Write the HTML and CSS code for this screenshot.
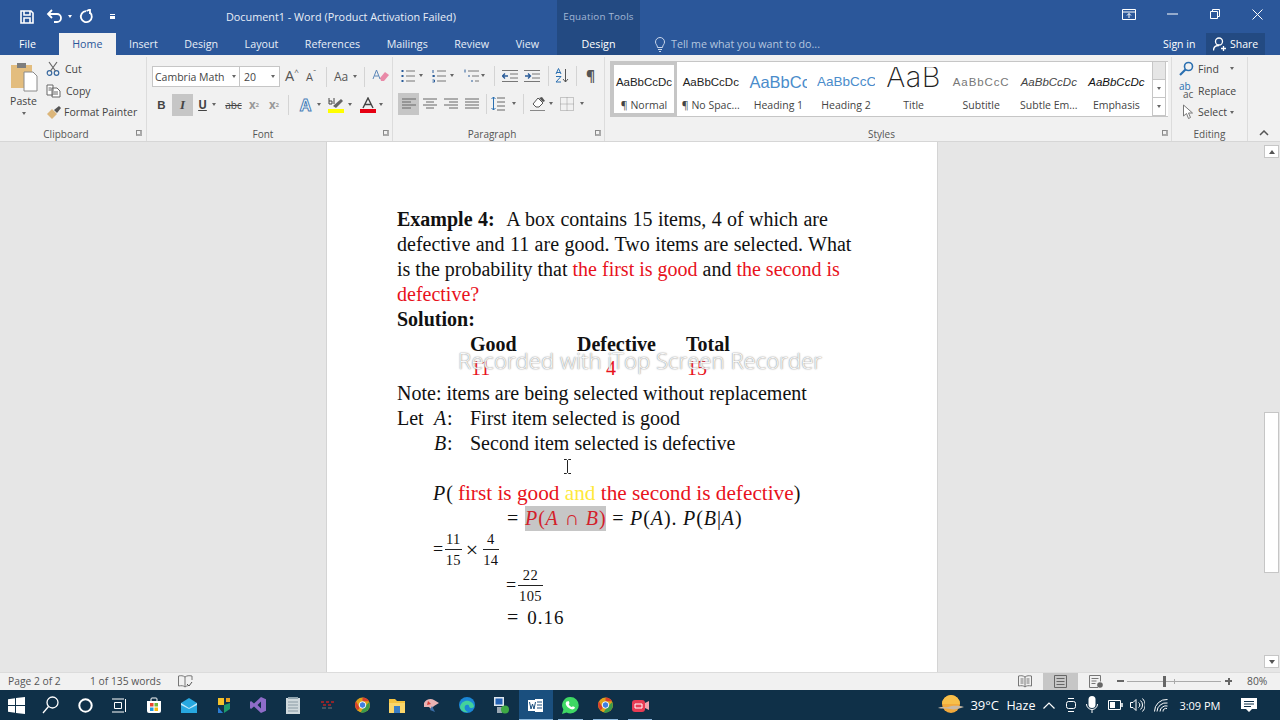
FILE: index.html
```html
<!DOCTYPE html>
<html lang="en">
<head>
<meta charset="utf-8">
<title>Document1 - Word</title>
<link rel="stylesheet" href="styles.css">
</head>
<body>
<div class="app">
<header class="head">
  <div class="head-left">
    <div class="qat">
      <svg class="q-save" width="16" height="16" viewBox="0 0 16 16" fill="none" stroke="#fff" stroke-width="1.6"><path d="M2 2h10l2 2v10H2z"/><path d="M5 2v4h6V2M5 14V9h6v5"/></svg>
      <svg class="q-undo" width="17" height="15" viewBox="0 0 17 15" fill="none" stroke="#fff" stroke-width="1.8"><path d="M2 5h9a4 4 0 0 1 0 8H8"/><path d="M6 1L2 5l4 4"/></svg>
      <span class="caret w q-c1"></span>
      <svg class="q-redo" width="15" height="15" viewBox="0 0 15 15" fill="none" stroke="#fff" stroke-width="1.8"><path d="M11 3.500a5.500 5.500 0 1 1-4-1.400"/><path d="M7.500 2L11 .5V5"/></svg>
      <span class="q-more"></span>
    </div>
    <div class="doc-title">Document1 - Word (Product Activation Failed)</div>
  </div>
  <div class="ctx">
    <div class="ctx-title">Equation Tools</div>
    <div class="ctx-tab">Design</div>
  </div>
  <div class="winctl">
    <svg width="14" height="11" viewBox="0 0 14 11" fill="none" stroke="#fff"><path d="M.5.500h13v10H.5zM.5 3h13"/><path d="M7 9V4.500M5 6.500l2-2 2 2"/></svg>
    <svg class="wc-min" width="11" height="2" viewBox="0 0 11 2"><path d="M0 1h11" stroke="#fff"/></svg>
    <svg class="wc-max" width="10" height="10" viewBox="0 0 10 10" fill="none" stroke="#fff"><path d="M.5 2.500h7v7h-7zM2.500 2.500v-2h7v7h-2"/></svg>
    <svg class="wc-close" width="11" height="11" viewBox="0 0 11 11" stroke="#fff"><path d="M.5.500l10 10M10.500.500l-10 10"/></svg>
  </div>
  <nav class="tabs">
    <span class="tab file">File</span><span class="tab active">Home</span><span class="tab">Insert</span><span class="tab">Design</span><span class="tab">Layout</span><span class="tab">References</span><span class="tab">Mailings</span><span class="tab">Review</span><span class="tab">View</span>
  </nav>
  <div class="tabs-right">
    <div class="tellme">
      <svg width="10" height="15" viewBox="0 0 10 15" fill="none" stroke="#c9d6ea"><path d="M2.500 10.500C2.500 8 .5 7.500.5 5a4.500 4.500 0 0 1 9 0c0 2.500-2 3-2 5.500zM3 12.500h4M4 14.500h2"/></svg>
      <span>Tell me what you want to do...</span>
    </div>
    <span class="signin">Sign in</span>
    <span class="share">
      <svg width="14" height="14" viewBox="0 0 14 14" fill="none" stroke="#fff" stroke-width="1.300"><circle cx="6" cy="4.500" r="3.500"/><path d="M.5 13.500c0-3 2-5 5.500-5M10.500 9v5M8 11.500h5"/></svg>
      Share
    </span>
  </div>
</header>

<section class="ribbon">
  <div class="group g-clip">
    <div class="g-body clip-body">
      <div class="paste">
        <svg width="28" height="30" viewBox="0 0 28 30"><rect x="1" y="3" width="21" height="23" fill="#e3bd7e"/><rect x="7" y="1" width="9" height="5" fill="#7d7d7d"/><path d="M14 10h9l4 4v15H14z" fill="#fff" stroke="#8a8a8a"/></svg>
        <span>Paste</span>
        <span class="caret"></span>
      </div>
      <div class="clip-col">
        <div class="sm"><svg width="15" height="15" viewBox="0 0 15 15" fill="none" stroke="#39699f" stroke-width="1.200"><circle cx="3.500" cy="12" r="2.300"/><circle cx="10.500" cy="12" r="2.300"/><path d="M4.500 10L11 1M9.500 10L3 1" stroke="#666"/></svg>Cut</div>
        <div class="sm"><svg width="15" height="14" viewBox="0 0 15 14" fill="none" stroke="#666"><path d="M1 1h6v10H1zM6 4h5l3 3v6H6z" fill="#fff"/><path d="M2.500 4h3M2.500 6h3M8 8h4M8 10h4"/></svg>Copy</div>
        <div class="sm"><svg width="16" height="15" viewBox="0 0 16 15"><path d="M1 9l5-5 5 5-5 5z" fill="#dcb67a"/><path d="M8 5l5-4 2 2-4 5z" fill="#555"/></svg>Format Painter</div>
      </div>
    </div>
    <div class="g-label">Clipboard<i class="launch"></i></div>
  </div>

  <div class="group g-font">
    <div class="g-body rows">
      <div class="row">
        <div class="combo c-font"><span>Cambria Math</span><span class="caret"></span></div>
        <div class="combo c-size"><span>20</span><span class="caret"></span></div>
        <span class="glyph grow">A<sup>^</sup></span>
        <span class="glyph shrink">A<sup>ˇ</sup></span>
        <i class="sep"></i>
        <span class="glyph aa">Aa</span><span class="caret"></span>
        <i class="sep"></i>
        <svg class="eraser" width="17" height="15" viewBox="0 0 17 15"><path d="M8 9l5-6 4 3-5 6H9z" fill="#e98aa8"/><path d="M1 10L4.500 1 8 10M2.500 7h4" fill="none" stroke="#5b86b8"/></svg>
      </div>
      <div class="row r2">
        <span class="ib bold">B</span>
        <span class="ib on ital">I</span>
        <span class="ib under">U</span><span class="caret"></span>
        <span class="ib strike">abc</span>
        <span class="ib mute">x<sub>2</sub></span>
        <span class="ib mute">x<sup>2</sup></span>
        <i class="sep"></i>
        <span class="ib effect">A</span><span class="caret"></span>
        <span class="ib hilite"><svg width="17" height="16" viewBox="0 0 17 16"><path d="M5 9l8-7 2 2-7 7z" fill="#666"/><path d="M1 1v6h3V4H1M6 1v6" fill="none" stroke="#444"/><rect x="0" y="12" width="16" height="4" fill="#ffff00"/></svg></span><span class="caret"></span>
        <span class="ib fcolor"><svg width="16" height="16" viewBox="0 0 16 16"><path d="M3 11L8 1l5 10M5 7.500h6" fill="none" stroke="#444" stroke-width="1.400"/><rect y="12" width="16" height="4" fill="#e60012"/></svg></span><span class="caret"></span>
      </div>
    </div>
    <div class="g-label">Font<i class="launch"></i></div>
  </div>

  <div class="group g-para">
    <div class="g-body rows">
      <div class="row p1">
        <svg class="pi" width="14" height="14" viewBox="0 0 14 14" stroke="#777"><path d="M5 2h9M5 7h9M5 12h9"/><path d="M.5 2h2M.5 7h2M.5 12h2" stroke="#2a5c99" stroke-width="2"/></svg><span class="caret ca"></span>
        <svg class="pi" width="14" height="14" viewBox="0 0 14 14" stroke="#777"><path d="M5 2h9M5 7h9M5 12h9"/><path d="M1 1v3M.5 6.500h2v1h-2M.5 11h2v2h-2" stroke="#2a5c99" fill="none"/></svg><span class="caret cb"></span>
        <svg class="pi pm" width="16" height="14" viewBox="0 0 16 14" stroke="#777"><path d="M4 2h11M8 7h7M11 12h4"/><path d="M1 .5v3M5 6v2M8 11v2" stroke="#2a5c99"/></svg><span class="caret cc"></span>
        <i class="sep s1"></i>
        <svg class="pi w21" width="16" height="12" viewBox="0 0 16 12" stroke="#777"><path d="M0 .5h16M8 4h8M8 8h8M0 11.500h16"/><path d="M6 6H1M3 3.500L.5 6 3 8.500" stroke="#2a5c99" fill="none" stroke-width="1.300"/></svg>
        <svg class="pi w21" width="16" height="12" viewBox="0 0 16 12" stroke="#777"><path d="M0 .5h16M8 4h8M8 8h8M0 11.500h16"/><path d="M1 6h5M4 3.500L6.500 6 4 8.500" stroke="#2a5c99" fill="none" stroke-width="1.300"/></svg>
        <i class="sep s2"></i>
        <svg class="pi w21" width="14" height="15" viewBox="0 0 14 15" fill="none"><path d="M1 6l2.500-5.500L6 6M1.500 4.500h4M1 8.500h5L1 14h5" stroke="#2a6fb0"/><path d="M10.500 1v13M8 11l2.500 3 2.500-3" stroke="#555"/></svg>
        <i class="sep s3"></i>
        <span class="pilcrow">¶</span>
      </div>
      <div class="row p2">
        <span class="ib on"><svg width="14" height="12" viewBox="0 0 14 12" stroke="#666"><path d="M0 1h14M0 4h9M0 7h14M0 10h9"/></svg></span>
        <span class="ib"><svg width="14" height="12" viewBox="0 0 14 12" stroke="#666"><path d="M0 1h14M3 4h8M0 7h14M3 10h8"/></svg></span>
        <span class="ib"><svg width="14" height="12" viewBox="0 0 14 12" stroke="#666"><path d="M0 1h14M5 4h9M0 7h14M5 10h9"/></svg></span>
        <span class="ib"><svg width="14" height="12" viewBox="0 0 14 12" stroke="#666"><path d="M0 1h14M0 4h14M0 7h14M0 10h14"/></svg></span>
        <i class="sep"></i>
        <span class="ib ls"><svg width="14" height="15" viewBox="0 0 14 15" fill="none" stroke="#666"><path d="M6 2h8M6 6h8M6 10h8M6 14h8"/><path d="M2.500 1v13M.5 3l2-2 2 2M.5 12l2 2 2-2" stroke="#2a6fb0"/></svg></span><span class="caret"></span>
        <i class="sep"></i>
        <span class="ib"><svg width="17" height="15" viewBox="0 0 17 15"><path d="M3 8l5-6 5 5-4 4H6z" fill="#fff" stroke="#555"/><path d="M9 2l4 4 2-1-3-4z" fill="#555"/><path d="M0 14.500h15" stroke="#888"/></svg></span><span class="caret"></span>
        <span class="ib"><svg width="14" height="14" viewBox="0 0 14 14" fill="none" stroke="#999" stroke-dasharray="1 1"><path d="M.5.500h13v13H.5zM7 .500v13M.5 7h13"/></svg></span><span class="caret cl"></span>
      </div>
    </div>
    <div class="g-label">Paragraph<i class="launch"></i></div>
  </div>

  <div class="group g-styles">
    <div class="g-body">
      <div class="gallery">
        <div class="sty cur"><span class="pv">AaBbCcDc</span><span class="nm">¶ Normal</span></div>
        <div class="sty"><span class="pv">AaBbCcDc</span><span class="nm">¶ No Spac...</span></div>
        <div class="sty"><span class="pv h1">AaBbCc</span><span class="nm">Heading 1</span></div>
        <div class="sty"><span class="pv h2">AaBbCcC</span><span class="nm">Heading 2</span></div>
        <div class="sty"><span class="pv ttl">AaB</span><span class="nm">Title</span></div>
        <div class="sty"><span class="pv sub">AaBbCcC</span><span class="nm">Subtitle</span></div>
        <div class="sty"><span class="pv em">AaBbCcDc</span><span class="nm">Subtle Em...</span></div>
        <div class="sty"><span class="pv em dk">AaBbCcDc</span><span class="nm">Emphasis</span></div>
        <div class="gal-scroll"><span class="gs-up"></span><span class="gs-dn"><i class="caret"></i></span><span class="gs-more"><i class="caret"></i></span></div>
      </div>
    </div>
    <div class="g-label">Styles<i class="launch"></i></div>
  </div>

  <div class="group g-edit">
    <div class="g-body edit-col">
      <div class="sm"><svg width="15" height="15" viewBox="0 0 15 15" fill="none" stroke="#2a6fb0" stroke-width="1.600"><circle cx="9.500" cy="5.500" r="4"/><path d="M6.500 8.500L1 14" stroke-width="2.200"/></svg>Find<span class="caret cf"></span></div>
      <div class="sm rep"><span class="abac"><b>ab</b><b>ac</b></span>Replace</div>
      <div class="sm sel"><svg width="13" height="16" viewBox="0 0 13 16" fill="#fff" stroke="#777"><path d="M1.500 1v11l3-2.500 2 5 2-1-2-4.500h4z"/></svg>Select<span class="caret"></span></div>
    </div>
    <div class="g-label gl-edit">Editing</div>
  </div>
  <div class="collapse"><svg width="10" height="6" viewBox="0 0 10 6" fill="none" stroke="#555" stroke-width="1.500"><path d="M1 5l4-4 4 4"/></svg></div>
</section>

<main class="work">
  <div class="canvas">
    <article class="page">
      <div class="line wide"><b class="ex">Example 4:</b>&nbsp; A box contains 15 items, 4 of which are</div>
      <div class="line wide">defective and 11 are good. Two items are selected. What</div>
      <div class="line">is the probability that <span class="red">the first is good</span> and <span class="red">the second is</span></div>
      <div class="line"><span class="red">defective?</span></div>
      <div class="line"><b>Solution:</b></div>
      <div class="line cols hd"><b class="c1">Good</b><b class="c2">Defective</b><b class="c3">Total</b></div>
      <div class="line cols red"><span class="c1 n1">11</span><span class="c2 n2">4</span><span class="c3">15</span></div>
      <div class="line">Note: items are being selected without replacement</div>
      <div class="line let"><span class="l0">Let</span><i class="mv">A</i><span class="colon">:</span><span>First item selected is good</span></div>
      <div class="line let"><span class="l0"></span><i class="mv">B</i><span class="colon">:</span><span>Second item selected is defective</span></div>
      <div class="line"></div>
      <div class="line ind"><i class="mv">P</i><span class="mth">(</span> <span class="red">first is good <span class="yel">and</span> the second is defective</span><span class="mth">)</span></div>
      <div class="line eq"><span class="mth">=</span> <span class="hl"><i class="mv">P</i>(<i class="mv">A</i> ∩ <i class="mv">B</i>)</span> <span class="mth">=</span> <i class="mv">P</i><span class="mth">(</span><i class="mv">A</i><span class="mth">).</span> <i class="mv">P</i><span class="mth">(</span><i class="mv">B</i><span class="mth">|</span><i class="mv">A</i><span class="mth">)</span></div>
      <div class="fline f1"><span class="feq">=</span><span class="frac"><span>11</span><span>15</span></span><span class="times">×</span><span class="frac"><span>4</span><span>14</span></span></div>
      <div class="fline f2"><span class="feq">=</span><span class="frac"><span>22</span><span>105</span></span></div>
      <div class="line eq last"><span class="mth">=</span> <span class="dec">0.16</span></div>
      <svg class="ibeam" width="9" height="15" viewBox="0 0 9 15" fill="none" stroke="#222"><path d="M1 .5h2.500l1 1 1-1H8M4.500 1.500v12M1 14.500h2.500l1-1 1 1H8"/></svg>
    </article>
    <div class="watermark">Recorded with iTop Screen Recorder</div>
  </div>
  <aside class="vscroll">
    <span class="vbtn"><i class="tri up"></i></span>
    <span class="vtrack"><span class="vthumb"></span></span>
    <span class="vbtn"><i class="tri dn"></i></span>
  </aside>
</main>

<footer class="status">
  <span class="st-a">Page 2 of 2</span>
  <span class="st-b">1 of 135 words</span>
  <svg width="15" height="13" viewBox="0 0 15 13" fill="none" stroke="#777"><path d="M7 2C5 .5 3 .5 .5 1v10c3-.5 5-.5 6.500 1 1.500-1 2-1.200 3-1.200M7 2v10M7 2c2-1.500 4-1.500 7-1v4"/><path d="M9 9l2 2 3-4" stroke="#555"/></svg>
  <span class="st-fill"></span>
  <svg class="vw" width="14" height="13" viewBox="0 0 14 13" fill="none" stroke="#777"><path d="M7 2C5 .5 3 .5.500 1v10c3-.5 5-.5 6.500 1 1.500-1.500 3.500-1.500 6.500-1V1C11 .5 9 .5 7 2zM7 2v10M2.500 4h3M2.500 6h3M2.500 8h3M8.500 4h3M8.500 6h3M8.500 8h3"/></svg>
  <span class="vw-on"><svg width="13" height="13" viewBox="0 0 13 13" fill="none" stroke="#666"><path d="M.5.500h12v12H.5zM2.500 3.500h8M2.500 6.500h8M2.500 9.500h8"/></svg></span>
  <svg class="vw2" width="14" height="13" viewBox="0 0 14 13" fill="none" stroke="#777"><path d="M9 12.500H.5V.5h11v6M2.500 3.500h7M2.500 6h5M2.500 8.500h4"/><circle cx="11" cy="10" r="2.800" fill="#666" stroke="none"/></svg>
  <span class="zoom-minus"></span>
  <span class="slider"><i class="thumb"></i><i class="tick"></i></span>
  <span class="zoom-plus"></span>
  <span class="st-z">80%</span>
</footer>

<footer class="taskbar">
  <span class="tb first"><svg width="17" height="17" viewBox="0 0 17 17" fill="#fff"><path d="M0 2.300l7-1v6.700H0zM8 1.100L17 0v8H8zM0 9h7v6.700l-7-1zM8 9h9v8l-9-1.100z"/></svg></span>
  <span class="tb"><svg width="17" height="18" viewBox="0 0 17 18" fill="none" stroke="#fff" stroke-width="1.300"><circle cx="10.500" cy="6.500" r="5.500"/><path d="M6.500 10.500L1 17"/></svg></span>
  <span class="tb"><svg width="15" height="15" viewBox="0 0 15 15" fill="none" stroke="#fff" stroke-width="2"><circle cx="7.500" cy="7.500" r="6.200"/></svg></span>
  <span class="tb"><svg width="15" height="15" viewBox="0 0 15 15" fill="none" stroke="#fff"><path d="M2.500 4.500h7v6h-7zM0 1h12M0 14h12M13.500 1v13" /></svg></span>
  <span class="tb"><svg width="14" height="16" viewBox="0 0 14 16"><path d="M0 4h14v10a2 2 0 0 1-2 2H2a2 2 0 0 1-2-2z" fill="#fff"/><path d="M4 4V2a1 1 0 0 1 1-1h4a1 1 0 0 1 1 1v2" fill="none" stroke="#fff"/><rect x="3" y="6" width="3.500" height="3.500" fill="#e8432f"/><rect x="7.500" y="6" width="3.500" height="3.500" fill="#72b83b"/><rect x="3" y="10.500" width="3.500" height="3.500" fill="#1f9ae0"/><rect x="7.500" y="10.500" width="3.500" height="3.500" fill="#f7b80c"/></svg></span>
  <span class="tb"><svg width="16" height="15" viewBox="0 0 16 15"><path d="M0 5l8-5 8 5v10H0z" fill="#27a8e0"/><path d="M0 5l8 5 8-5v2l-8 4-8-4z" fill="#bfe8fa"/></svg></span>
  <span class="tb"><svg width="14" height="17" viewBox="0 0 14 17"><path d="M1 1h6v7H1z" fill="#f4c22b"/><path d="M7 8l6-2v6l-6 4z" fill="#1c9a6d"/><path d="M1 10l5 6H1z" fill="#2b7cd3"/><path d="M9 1h4v4H9z" fill="#e8a020"/></svg></span>
  <span class="tb"><svg width="16" height="16" viewBox="0 0 16 16"><path d="M11 0l5 2.300v11.400L11 16 4 9.500 1 12 0 11V5l1-1 3 2.500zM11 4.500L7.500 8 11 11.500z" fill="#8e6cc9"/></svg></span>
  <span class="tb"><svg width="14" height="17" viewBox="0 0 14 17"><rect y="1" width="14" height="16" fill="#cfd8dc"/><path d="M2 5h10M2 8h10M2 11h10M2 14h10" stroke="#8a9aa4"/><rect x="2" y="0" width="10" height="2" fill="#90a4ae"/></svg></span>
  <span class="tb"><svg width="15" height="8" viewBox="0 0 15 8"><path d="M1 1h3M6 1h3M11 1h3M3 4h3M8 4h3" stroke="#b22" stroke-width="1.400"/><path d="M2 7h4M8 7h4" stroke="#777"/></svg></span>
  <span class="tb"><svg width="15" height="16" viewBox="0 0 16 16"><circle cx="8" cy="8" r="8" fill="#e0a21b"/><path d="M8 0a8 8 0 0 1 7 4H8z" fill="#d9402e"/><path d="M1 4l4 7-2 2.500A8 8 0 0 1 1 4z" fill="#d9402e"/><path d="M6 16l3-5 6-6a8 8 0 0 1-9 11z" fill="#3b9b4a"/><circle cx="8" cy="8" r="3.500" fill="#3f7fe0" stroke="#fff"/></svg></span>
  <span class="tb"><svg width="16" height="15" viewBox="0 0 16 15"><path d="M0 1h6l2 2h8v12H0z" fill="#f5c33f"/><path d="M0 5h16v10H0z" fill="#fbd66a"/><rect x="5" y="8" width="6" height="7" fill="#3a7dc4"/></svg></span>
  <span class="tb"><svg width="17" height="15" viewBox="0 0 17 15"><path d="M1 5c2-4 7-5 10-3l5 3-5 3-3 3-2-2-5 0z" fill="#e9b3b3"/><path d="M9 8l3 6-5-2z" fill="#3b6ea8"/><path d="M5 3l3 3-4 1z" fill="#d8413a"/></svg></span>
  <span class="tb"><svg width="16" height="16" viewBox="0 0 16 16"><circle cx="8" cy="8" r="8" fill="#1b87d6"/><path d="M1 10C2 5 6 3 10 4c3 1 5 3 5 6-2 2-5 1-5-1 0-1-2-2-4 0-1 2 0 5 3 6-4 1-8-2-8-5z" fill="#43d19b"/></svg></span>
  <span class="tb"><svg width="15" height="17" viewBox="0 0 15 17"><rect width="10" height="9" fill="#dfe7ee"/><rect x="1.500" y="1.500" width="7" height="6" fill="#2462b3"/><rect x="3" y="10" width="5" height="6" fill="#9aa7b3"/><circle cx="11" cy="12.500" r="4" fill="#3eaa44"/></svg></span>
  <span class="tb word run"><svg width="15" height="15" viewBox="0 0 15 15"><rect x="7" y="1" width="8" height="13" fill="#fff"/><path d="M9 4h5M9 7h5M9 10h5" stroke="#1a4f7e"/><rect y="2" width="9" height="11" fill="#fff"/><path d="M1.500 4l1.500 7 1.500-5 1.500 5 1.500-7" fill="none" stroke="#1a4f7e"/></svg></span>
  <span class="tb run"><svg width="17" height="17" viewBox="0 0 17 17"><path d="M8.500 0a8.200 8.200 0 0 1 0 16.500c-1.500 0-2.700-.3-3.900-1L0 17l1.400-4.400A8.200 8.200 0 0 1 8.500 0z" fill="#3ed864"/><path d="M5.500 4.500c1-1 1.500 0 2 1.500 0 .6-1 1-.7 1.500.6 1.200 1.500 2 2.700 2.500.5.200 1-1 1.500-.8 1.500.6 2.200 1 1.800 1.800-.6 1.400-2.500 1.800-4.300 1-2.500-1-4-2.700-4.700-4.700-.3-1 .1-2 .7-2.800z" fill="#fff"/></svg></span>
  <span class="tb run"><svg width="15" height="16" viewBox="0 0 16 16"><circle cx="8" cy="8" r="8" fill="#e0a21b"/><path d="M8 0a8 8 0 0 1 7 4H8z" fill="#d9402e"/><path d="M1 4l4 7-2 2.500A8 8 0 0 1 1 4z" fill="#d9402e"/><path d="M6 16l3-5 6-6a8 8 0 0 1-9 11z" fill="#3b9b4a"/><circle cx="8" cy="8" r="3.500" fill="#3f7fe0" stroke="#fff"/></svg></span>
  <span class="tb run"><svg width="17" height="13" viewBox="0 0 17 13"><rect width="13" height="12" rx="3" y="1" fill="#e83b54"/><path d="M3 5h7v4H3z" fill="none" stroke="#fff"/><path d="M13 4l4-2v9l-4-2z" fill="#f2a3ae"/></svg></span>
  <span class="tray">
    <svg class="sun" width="26" height="20" viewBox="0 0 26 20"><circle cx="13" cy="9" r="9" fill="#f2a93b"/><path d="M4 9a9 9 0 0 1 18 0z" fill="#f7bf4a"/><path d="M0 13c4-2 6 0 10-1s8-2 16 0c-6 2-10 3-14 2s-8 0-12-1z" fill="#c8b9a6"/></svg>
    <span class="temp">39°C</span><span class="haze">Haze</span>
    <svg class="tr-up" width="12" height="7" viewBox="0 0 12 7" fill="none" stroke="#fff" stroke-width="1.200"><path d="M.5 6.500L6 1l5.500 5.500"/></svg>
    <svg class="tr-cam" width="10" height="16" viewBox="0 0 10 16" fill="none" stroke="#fff"><rect x=".5" y="4.500" width="9" height="7" rx="2"/><path d="M2 1.500h6M2 14.500h6"/></svg>
    <svg class="tr-mic" width="12" height="18" viewBox="0 0 12 18"><rect x="2.500" y="0" width="7" height="12" rx="3.500" fill="#fff"/><path d="M.5 8a5.500 5.500 0 0 0 11 0M6 14v3" fill="none" stroke="#fff"/></svg>
    <svg class="tr-bat" width="15" height="10" viewBox="0 0 15 10" fill="none" stroke="#fff"><path d="M.5.500h12v9H.5z"/><path d="M14 3v4" stroke-width="1.500"/><rect x="2" y="2" width="5" height="6" fill="#fff" stroke="none"/></svg>
    <svg class="tr-vol" width="15" height="14" viewBox="0 0 15 14" fill="none" stroke="#fff"><path d="M.5 4.500h2.500l3-3v11l-3-3H.5zM8.500 4.500a3 3 0 0 1 0 5M10.500 2.500a6 6 0 0 1 0 9M12.500.5a9 9 0 0 1 0 13"/></svg>
    <svg class="tr-wifi" width="14" height="13" viewBox="0 0 14 13" fill="none" stroke="#fff"><path d="M.5 12.500a12 12 0 0 1 13-12M3 12.500a9 9 0 0 1 10.500-8.500M6 12.500a6 6 0 0 1 7.500-5.500M9 12.500a3 3 0 0 1 4-3"/></svg>
    <span class="clock">3:09 PM</span>
    <svg class="tr-note" width="16" height="15" viewBox="0 0 16 15"><path d="M0 0h16v11h-5l-3 3-3-3H0z" fill="#fff"/><path d="M3 3.500h10M3 6h10M3 8.500h7" stroke="#0f3048"/></svg>
  </span>
</footer>
</div>
</body>
</html>
```
FILE: styles.css
```css
* { box-sizing: border-box; }
html, body { margin: 0; padding: 0; height: 720px; overflow: hidden; }
body { font-family: "Open Sans", "Noto Sans", sans-serif; font-size: 11px; color: #444; }
.app { width: 1280px; height: 720px; display: flex; flex-direction: column; }
svg { display: block; flex: none; }

/* header */
.head { display: grid; grid-template-columns: 557px 83px 1fr; grid-template-rows: 33px 22px; background: #2b579a; color: #fff; flex: none; }
.head-left { display: flex; align-items: center; }
.qat { display: flex; align-items: center; width: 226px; padding-left: 19px; height: 28px; }
.q-undo { margin-left: 11px; }
.q-c1 { margin-left: 5px; }
.q-redo { margin-left: 7px; }
.q-more { width: 5px; height: 5px; margin-left: 16px; border-top: 1px solid #fff; border-bottom: 3px solid #fff; }
.doc-title { font-size: 10.830px; color: #e8eef7; white-space: nowrap; }
.ctx { grid-column: 2; grid-row: 1 / span 2; background: #234a82; display: grid; grid-template-rows: 33px 22px; justify-items: center; align-items: center; }
.ctx-title { font-size: 9.800px; color: #a3b8d6; letter-spacing: .2px; }
.ctx-tab { font-size: 10.700px; color: #fff; }
.winctl { grid-column: 3; grid-row: 1; display: flex; align-items: center; padding-left: 482px; height: 28px; }
.wc-min { margin-left: 31px; }
.wc-max { margin-left: 32px; }
.wc-close { margin-left: 32px; }
.tabs { grid-column: 1; grid-row: 2; display: flex; padding-left: 5px; align-items: stretch; }
.tab { padding: 0 13.250px; display: flex; align-items: center; font-size: 10.700px; color: #e8eef7; white-space: nowrap; }
.tab.file { padding: 0 14px; margin-right: 9px; color: #fff; }
.tab.active { background: #f1f1f1; color: #2b579a; }
.tabs-right { grid-column: 3; grid-row: 2; display: flex; align-items: center; }
.tellme { display: flex; align-items: center; gap: 6px; padding-left: 15px; width: 523px; color: #b4c6df; font-size: 10.700px; }
.signin { font-size: 10.500px; width: 43px; color: #fff; }
.share { height: 22px; width: 59px; background: #234a82; display: flex; align-items: center; gap: 3px; padding-left: 7px; font-size: 10.500px; color: #fff; }

/* ribbon */
.ribbon { height: 87px; flex: none; background: #f1f1f1; display: flex; border-bottom: 1px solid #d6d6d6; position: relative; }
.group { display: flex; flex-direction: column; height: 84px; margin-top: 2px; border-right: 1px solid #dcdcdc; flex: none; }
.g-clip { width: 147px; }
.g-font { width: 246px; padding-left: 5px; }
.g-para { width: 212px; padding-left: 5px; }
.g-styles { width: 567px; padding-left: 5px; border-right: 1px solid #dcdcdc; }
.g-edit { width: 76px; }
.g-body { flex: 1; min-height: 0; }
.g-label { height: 19px; padding: 4px 18px 0 0; display: flex; align-items: center; justify-content: center; font-size: 10px; color: #555; position: relative; }
.g-clip .g-label { padding-right: 14px; }
.gl-edit { padding-right: 0; }
.launch { position: absolute; right: 3px; top: 8px; width: 6px; height: 6px; border-left: 1px solid #888; border-top: 1px solid #888; border-bottom: 2px solid #aaa; border-right: 2px solid #aaa; }
.g-clip .launch { right: 4px; }
.caret { display: inline-block; flex: none; width: 0; height: 0; border-left: 2.500px solid transparent; border-right: 2.500px solid transparent; border-top: 3px solid #666; }
.caret.w { border-top-color: #fff; }

.clip-body { display: flex; }
.paste { width: 46px; display: flex; flex-direction: column; align-items: center; padding-top: 5px; padding-left: 1px; font-size: 10.500px; color: #444; }
.paste span:nth-child(2) { margin-top: 2px; line-height: 15px; }
.paste .caret { margin-top: 3px; }
.clip-col { display: flex; flex-direction: column; padding-top: 1px; }
.sm { height: 21.700px; display: flex; align-items: center; gap: 4px; font-size: 10.500px; color: #444; white-space: nowrap; flex: none; }
.clip-col .sm:nth-child(2) { gap: 5px; }
.clip-col .sm:nth-child(3) { gap: 2px; }

.rows { display: flex; flex-direction: column; }
.row { display: flex; align-items: center; flex: none; }
.g-font .row:first-child { height: 23px; margin-top: 8px; }
.r2 { height: 23px; margin-top: 5px; margin-left: -1px; }
.combo { height: 21px; background: #fff; border: 1px solid #c6c6c6; display: flex; align-items: center; justify-content: space-between; padding: 0 3px 0 2px; font-size: 10.500px; color: #444; }
.c-font { width: 88px; }
.c-size { width: 41px; margin-left: -1px; padding-right: 4px; padding-left: 4px; }
.glyph { font-size: 13px; color: #555; line-height: 1; }
.glyph sup { font-size: 8px; vertical-align: 6px; line-height: 0; }
.grow { margin-left: 5px; font-size: 14.500px; width: 21px; }
.shrink { font-size: 11px; width: 13px; }
.aa { margin-right: 5px; font-size: 12px; }
.sep { width: 1px; height: 20px; background: #d4d4d4; flex: none; margin: 0 9px; }
.row .sep { margin-left: 7px; margin-right: 7px; }
.eraser { margin-left: 0; }
.ib { width: 21px; height: 22px; display: flex; align-items: center; justify-content: center; flex: none; font-size: 11.500px; color: #444; }
.ib.on { background: #c6c6c6; }
.bold { font-weight: 700; font-family: "Liberation Sans", sans-serif; }
.ital { font-style: italic; font-family: "Liberation Serif", serif; font-size: 13px; font-weight: 700; }
.under { text-decoration: underline; font-weight: 700; width: 19px; }
.strike { text-decoration: line-through; font-size: 10px; margin-left: 5px; }
.mute { color: #999; font-weight: 700; width: 20px; }
.mute sub, .mute sup { font-size: 6px; line-height: 0; }
.r2 .sep { margin-left: 4px; margin-right: 5px; }
.effect { font-size: 16px; color: #fff; font-weight: 700; -webkit-text-stroke: 1px #4a7fb8; width: 23px; }
.hilite { width: 24px; margin-left: 1px; }
.fcolor { width: 22px; margin-left: 3px; }
.r2 > .caret { margin-right: 2px; }

.p1 { height: 23px; margin-top: 7px; padding-left: 3px; }
.p2 { height: 23px; margin-top: 5px; }
.p1 .pi { margin-right: 4px; }
.p1 .pm { margin-right: 1px; }
.p1 .ca { margin-right: 9px; }
.p1 .cb { margin-right: 10px; }
.p1 .pi.w21 { margin: 0 3px; }
.p1 .s1 { margin: 0 4px 0 9px; }
.p1 .s2 { margin: 0 3px 0 5px; }
.p1 .s3 { margin: 0 6px 0 4px; }
.pilcrow { font-size: 14px; color: #555; font-weight: 700; margin-left: 3px; }
.p2 > .caret { margin-right: 3px; }
.p2 .sep { margin: 0 4px; }
.p2 .ls { width: 19px; margin-right: 2px; justify-content: flex-start; }
.p2 .cl { margin-left: 3px; }

.gallery { margin-top: 4px; height: 56px; width: 558px; background: #fff; border: 1px solid #c6c6c6; border-width: 1px 0 1px 1px; display: flex; }
.sty { width: 67.600px; flex: none; display: flex; flex-direction: column; align-items: center; overflow: hidden; border: 3px solid transparent; padding-top: 2px; }
.sty.cur { border-color: #c6c6c6; width: 66px; }
.pv { height: 30px; line-height: 30px; font-size: 11.500px; color: #222; white-space: nowrap; width: 58px; overflow: hidden; font-family: "Liberation Sans", sans-serif; text-align: center; flex: none; }
.pv.h1 { font-size: 16.500px; color: #4a8ccb; }
.pv.h2 { font-size: 13.500px; color: #4a8ccb; }
.pv.ttl { font-size: 29px; color: #222; font-weight: 200; font-family: "Inter", sans-serif; line-height: 20px; letter-spacing: .5px; }
.pv.sub { color: #777; font-size: 11.500px; letter-spacing: .9px; }
.pv.em { color: #444; font-style: italic; }
.pv.dk { color: #111; }
.nm { font-size: 10.500px; color: #444; white-space: nowrap; line-height: 16px; }
.gal-scroll { width: 14px; margin-left: 2px; display: flex; flex-direction: column; margin-top: -1px; height: 56px; border: 1px solid #c6c6c6; flex: none; }
.gal-scroll span { flex: 1; display: flex; align-items: center; justify-content: center; border-bottom: 1px solid #c6c6c6; }
.gs-up { background: #e6e6e6; }

.edit-col { padding: 1px 0 0 7px; display: flex; flex-direction: column; }
.cf { margin-left: 7px; }
.rep { gap: 3px; }
.abac { display: flex; flex-direction: column; width: 16px; line-height: 8px; font-size: 10px; color: #2a6fb0; padding-bottom: 2px; }
.abac b { font-weight: 400; }
.abac b:last-child { padding-left: 4px; color: #555; }
.sel { gap: 3px; padding-left: 3px; }
.sel .caret { margin-left: 0; }
.collapse { flex: 1; display: flex; align-items: flex-end; justify-content: center; padding-bottom: 5px; padding-right: 1px; }

/* work */
.work { height: 530px; flex: none; display: flex; background: #e6e6e6; }
.canvas { width: 1263px; position: relative; overflow: hidden; padding-left: 326px; }
.page { width: 612px; height: 530px; background: #fff; border: 1px solid #d4d4d4; border-width: 0 1px; padding: 65px 0 0 70px; font-family: "Liberation Serif", serif; font-size: 20px; color: #111; position: relative; }
.line { height: 24.900px; line-height: 24.900px; white-space: nowrap; }
.wide { word-spacing: .4px; }
.ex { margin-right: 2px; }
.hd { padding-top: 1px; }
.red { color: #e8121c; }
.yel { color: #ffe93b; }
.cols { display: flex; padding-left: 73px; }
.c1 { width: 107px; }
.c2 { width: 109px; }
.n1 { width: 136px; padding-left: 1px; }
.n2 { width: 81px; }
.let { display: flex; }
.l0 { width: 37px; }
.mv { font-style: italic; letter-spacing: 1px; font-size: 20px; }
.colon { width: 23px; margin-left: 2px; }
.let .mv { width: 11px; }
.ind { padding-left: 36px; }
.ind .red { font-size: 21.250px; }
.mth { font-size: 20px; }
.eq { padding-left: 110px; font-size: 20px; letter-spacing: .8px; }
.hl { background: #c6c6c6; color: #d3202a; display: inline-block; height: 25px; line-height: 25px; padding: 0; }
.fline { display: flex; align-items: center; font-size: 14px; }
.f1 { height: 40px; padding-left: 36px; margin-top: -1px; }
.f2 { height: 39px; padding-left: 109px; margin-top: -4px; }
.feq { font-size: 18px; width: 12px; }
.frac { display: flex; flex-direction: column; align-items: center; font-size: 14.500px; letter-spacing: .4px; line-height: 20px; }
.frac span:first-child { border-bottom: 1px solid #222; padding: 0 1px; }
.frac span { width: 100%; text-align: center; }
.f2 .frac { min-width: 25px; }
.times { font-size: 22px; margin: 0 5px 0 4px; }
.last { height: 24px; margin-top: 0; letter-spacing: 1px; }
.dec { font-size: 19px; margin-left: 2px; }
.ibeam { position: absolute; left: 236px; top: 317px; }
.watermark { position: absolute; left: 458px; top: 206px; font-family: "Open Sans", sans-serif; font-size: 22.200px; font-weight: 300; color: #f8f8f8; white-space: nowrap; text-shadow: 0 0 1px #888, 0 0 2px #aaa; line-height: 26px; }

.vscroll { width: 17px; display: flex; flex-direction: column; align-items: center; padding: 3px 0 4px; }
.vbtn { width: 15px; height: 13px; background: #fff; border: 1px solid #c6c6c6; display: flex; align-items: center; justify-content: center; flex: none; }
.tri { width: 0; height: 0; border-left: 3.500px solid transparent; border-right: 3.500px solid transparent; }
.tri.up { border-bottom: 4px solid #555; }
.tri.dn { border-top: 4px solid #555; }
.vtrack { flex: 1; width: 100%; padding-top: 254px; display: flex; justify-content: center; }
.vthumb { width: 15px; height: 161px; background: #fff; border: 1px solid #c6c6c6; }

/* status */
.status { height: 18px; flex: none; background: #f1f1f1; border-top: 1px solid #dcdcdc; padding-bottom: 1px; display: flex; align-items: center; font-size: 10.300px; color: #555; }
.st-a { margin-left: 8px; width: 82px; }
.st-b { width: 88px; }
.st-fill { flex: 1; }
.vw { margin-right: 11px; }
.vw-on { width: 35px; height: 17px; background: #c6c6c6; display: flex; align-items: center; justify-content: center; }
.vw2 { margin-left: 11px; }
.zoom-minus { width: 7px; height: 2px; background: #666; margin-left: 14px; }
.slider { width: 94px; height: 1px; background: #aaa; margin: 0 4px 0 3px; position: relative; }
.thumb { position: absolute; left: 36px; top: -5px; width: 3px; height: 11px; background: #666; }
.tick { position: absolute; left: 47px; top: -2px; width: 1px; height: 5px; background: #aaa; }
.zoom-plus { width: 7px; height: 7px; background: linear-gradient(#666,#666) center/7px 2px no-repeat, linear-gradient(#666,#666) center/2px 7px no-repeat; }
.st-z { margin-left: 15px; margin-right: 13px; width: 20px; }

/* taskbar */
.taskbar { height: 30px; flex: none; background: #0f3048; display: flex; align-items: center; color: #fff; }
.tb { width: 34.700px; height: 30px; flex: none; display: flex; align-items: center; justify-content: center; position: relative; }
.tb.first { width: 33px; }
.tb.word { background: #1a4f7e; }
.tb.run::after { content: ""; position: absolute; left: 5px; right: 5px; bottom: 0; height: 1px; background: #8db8dc; }
.tb.word.run::after { left: 0; right: 0; }
.tray { flex: 1; display: flex; align-items: center; padding-left: 281px; height: 30px; }
.sun { margin-right: 6px; }
.temp { font-size: 13px; width: 36px; }
.haze { font-size: 12.500px; width: 37px; }
.tr-cam { margin-left: 11px; }
.tr-mic { margin-left: 10px; }
.tr-bat { margin-left: 10px; }
.tr-vol { margin-left: 7px; }
.tr-wifi { margin-left: 9px; }
.clock { font-size: 11px; margin-left: 11px; width: 62px; }
```
